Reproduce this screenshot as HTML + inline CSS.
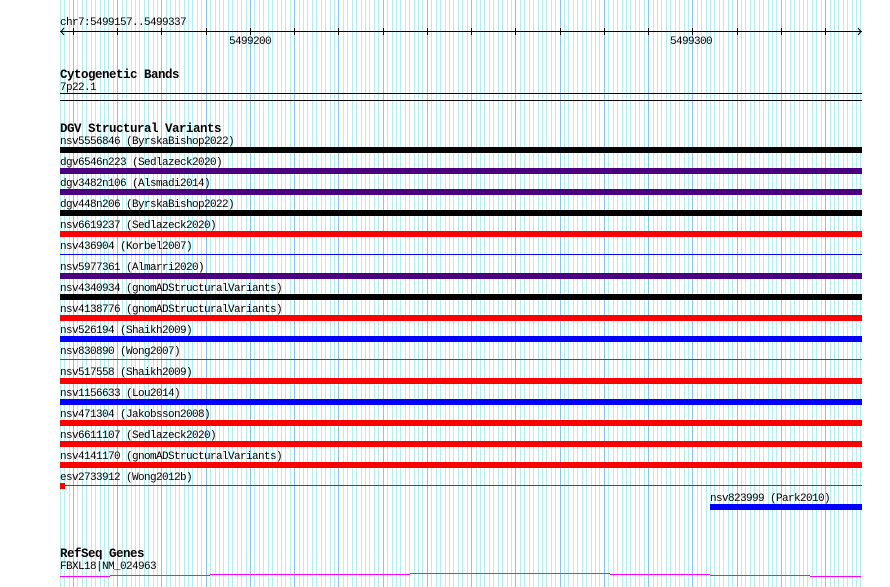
<!DOCTYPE html>
<html><head><meta charset="utf-8">
<style>
html,body{margin:0;padding:0;background:#fff;width:890px;height:587px;overflow:hidden}
svg{display:block}
text{font-family:"Liberation Mono","DejaVu Sans Mono",monospace;font-size:11px;letter-spacing:-0.6px;fill:#000}
.b{font-weight:bold;font-size:12.5px;letter-spacing:-0.5px}
</style></head><body>
<svg id="s" width="890" height="587" xmlns="http://www.w3.org/2000/svg">
<g id="grid"></g>
<text x="60" y="25">chr7:5499157..5499337</text>
<line x1="60" y1="31.5" x2="862" y2="31.5" stroke="#000"/>
<polyline points="64,28 61,31.5 64,35" fill="none" stroke="#000"/>
<polyline points="858,28 861,31.5 858,35" fill="none" stroke="#000"/>
<g id="ticks"></g>
<text x="229" y="44">5499200</text>
<text x="670" y="44">5499300</text>
<text class="b" x="60" y="78">Cytogenetic Bands</text>
<text x="60" y="90">7p22.1</text>
<rect x="60" y="93" width="802" height="1" fill="#000"/>
<rect x="60" y="100" width="802" height="1" fill="#000"/>
<text class="b" x="60" y="132">DGV Structural Variants</text>
<g id="rows"></g>
<text x="710" y="501">nsv823999 (Park2010)</text>
<rect x="710" y="504" width="152" height="6" fill="#0000ff"/>
<text class="b" x="60" y="557">RefSeq Genes</text>
<text x="60" y="569">FBXL18|NM_024963</text>
<g fill="#ff00ff">
<rect x="60" y="576" width="50" height="1"/>
<rect x="110" y="575" width="100" height="1"/>
<rect x="210" y="574" width="200" height="1"/>
<rect x="410" y="573" width="200" height="1"/>
<rect x="610" y="574" width="100" height="1"/>
<rect x="710" y="575" width="100" height="1"/>
<rect x="810" y="576" width="51" height="1"/>
</g>
</svg>
<script>
var NS="http://www.w3.org/2000/svg";
function el(p,t,a){var e=document.createElementNS(NS,t);for(var k in a)e.setAttribute(k,a[k]);p.appendChild(e);return e;}
var g=document.getElementById("grid"),tk=document.getElementById("ticks");
for(var k=-3;k<=178;k++){var x=Math.round(73+4.424*k);
 var d=(k%10===0);
 el(g,"rect",{x:x,y:0,width:1,height:587,fill:d?"#88c4f0":"#b4eef0"});
 if(d) el(tk,"rect",{x:x,y:28,width:1,height:7,fill:"#000"});
}
var rows=[["nsv5556846 (ByrskaBishop2022)","#000000",0],
["dgv6546n223 (Sedlazeck2020)","#4b0082",0],
["dgv3482n106 (Alsmadi2014)","#4b0082",0],
["dgv448n206 (ByrskaBishop2022)","#000000",0],
["nsv6619237 (Sedlazeck2020)","#ff0000",0],
["nsv436904 (Korbel2007)","#0000ff",1],
["nsv5977361 (Almarri2020)","#4b0082",0],
["nsv4340934 (gnomADStructuralVariants)","#000000",0],
["nsv4138776 (gnomADStructuralVariants)","#ff0000",0],
["nsv526194 (Shaikh2009)","#0000ff",0],
["nsv830890 (Wong2007)","#ff0000",1],
["nsv517558 (Shaikh2009)","#ff0000",0],
["nsv1156633 (Lou2014)","#0000ff",0],
["nsv471304 (Jakobsson2008)","#ff0000",0],
["nsv6611107 (Sedlazeck2020)","#ff0000",0],
["nsv4141170 (gnomADStructuralVariants)","#ff0000",0],
["esv2733912 (Wong2012b)","#ff0000",2]];
var r=document.getElementById("rows");
rows.forEach(function(w,i){var y=147+21*i;
 var t=el(r,"text",{x:60,y:y-3});t.textContent=w[0];
 if(w[2]===0) el(r,"rect",{x:60,y:y,width:802,height:6,fill:w[1]});
 else {el(r,"rect",{x:60,y:y+2,width:802,height:1,fill:w[1]});
  if(w[2]===2) el(r,"rect",{x:60,y:y,width:5,height:6,fill:w[1]});}
});
</script>
</body></html>
